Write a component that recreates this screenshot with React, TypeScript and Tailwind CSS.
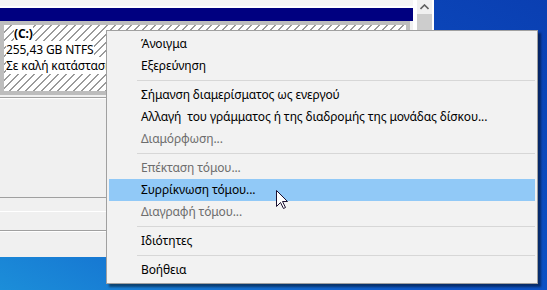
import React from 'react';

type Entry = { label?: string; disabled?: boolean; active?: boolean; sep?: boolean };

const menu: Entry[] = [
  { label: 'Άνοιγμα' },
  { label: 'Εξερεύνηση' },
  { sep: true },
  { label: 'Σήμανση διαμερίσματος ως ενεργού' },
  { label: 'Αλλαγή  του γράμματος ή της διαδρομής της μονάδας δίσκου...' },
  { label: 'Διαμόρφωση...', disabled: true },
  { sep: true },
  { label: 'Επέκταση τόμου...', disabled: true },
  { label: 'Συρρίκνωση τόμου...', active: true },
  { label: 'Διαγραφή τόμου...', disabled: true },
  { sep: true },
  { label: 'Ιδιότητες' },
  { sep: true },
  { label: 'Βοήθεια' },
];

function Cursor() {
  return (
    <svg width="13" height="20" viewBox="0 0 13 20" className="absolute left-[276px] top-[190px]">
      <path
        d="M0.5 0.5 L0.5 16.5 L4.5 12.5 L7.5 18.5 L9.5 17.5 L6.5 11.5 L11.5 11.5 Z"
        fill="#fff"
        stroke="#1a1030"
        strokeWidth="1"
        strokeLinejoin="miter"
      />
    </svg>
  );
}

export default function App() {
  return (
    <div
      className="relative w-[547px] h-[290px] overflow-hidden bg-[linear-gradient(to_top_right,#1c8ed9_0%,#0d55c8_40%,#0a3fb2_100%)] text-[12px] text-black"
      style={{ fontFamily: '"Noto Sans", "Open Sans", sans-serif' }}
    >
      {/* disk management window */}
      <div className="w-[434px] h-[257px] flex flex-col bg-[#f0f0f0]">
        <div className="h-[97px] flex">
          <div className="w-[413px] flex flex-col">
            <div className="h-[6px] bg-[#f5f5f5]" />
            <div className="h-[2px] bg-white" />
            <div className="h-[13px] bg-[#000080]" />
            <div className="h-[74px] border-4 border-[#bdbdbd] mr-[3px] bg-[repeating-linear-gradient(135deg,#ffffff_0px,#ffffff_4.6px,#9a9a9a_4.6px,#9a9a9a_5.66px)]">
              <div className="pt-[1px] pl-[2px] leading-[16px] whitespace-nowrap overflow-hidden tracking-[-0.1px]">
                <div className="pl-[8px]">
                  <span className="bg-white font-bold">(C:)</span>
                </div>
                <div>
                  <span className="bg-white">255,43 GB NTFS</span>
                </div>
                <div>
                  <span className="bg-white">Σε καλή κατάσταση (Εκκίνηση, Κύριο διαμέρισμα)</span>
                </div>
              </div>
            </div>
            <div className="flex-1" />
          </div>
          <div className="w-[4px] bg-white" />
          <div className="w-[15px] flex flex-col bg-[#f0f0f0]">
            <div className="h-[14px] flex items-center justify-center">
              <svg width="9" height="6" viewBox="0 0 9 6">
                <path d="M0.5 5 L4.5 1 L8.5 5" fill="none" stroke="#606060" strokeWidth="1.6" />
              </svg>
            </div>
            <div className="h-[60px] bg-[#cdcdcd]" />
          </div>
          <div className="w-[2px] bg-white" />
        </div>
        <div className="h-[2px] border-t border-[#a0a0a0] bg-white" />
        <div className="h-[98px]" />
        <div className="h-[14px] border-t border-[#a0a0a0]" />
        <div className="h-[1px] bg-white" />
        <div className="h-[18px]" />
        <div className="h-[2px] border-t border-[#a0a0a0] bg-white" />
        <div className="flex-1" />
      </div>

      {/* context menu */}
      <div className="absolute left-[106px] top-[30px] w-[432px] border border-[#a0a0a0] bg-[#f2f2f2] p-[2px] shadow-[3px_3px_2px_rgba(0,0,0,0.45)] whitespace-pre tracking-[-0.12px]">
        {menu.map((m, i) =>
          m.sep ? (
            <div key={i} className="h-[7px] flex items-center pl-[28px]">
              <div className="h-[1px] w-full bg-[#d7d7d7]" />
            </div>
          ) : (
            <div
              key={i}
              className={
                'h-[22px] flex items-center pl-[32px] ' +
                (m.active ? 'bg-[#91c9f7] ' : '') +
                (m.disabled ? 'text-[#6d6d6d]' : 'text-black')
              }
            >
              {m.label}
            </div>
          )
        )}
      </div>

      <Cursor />
    </div>
  );
}
